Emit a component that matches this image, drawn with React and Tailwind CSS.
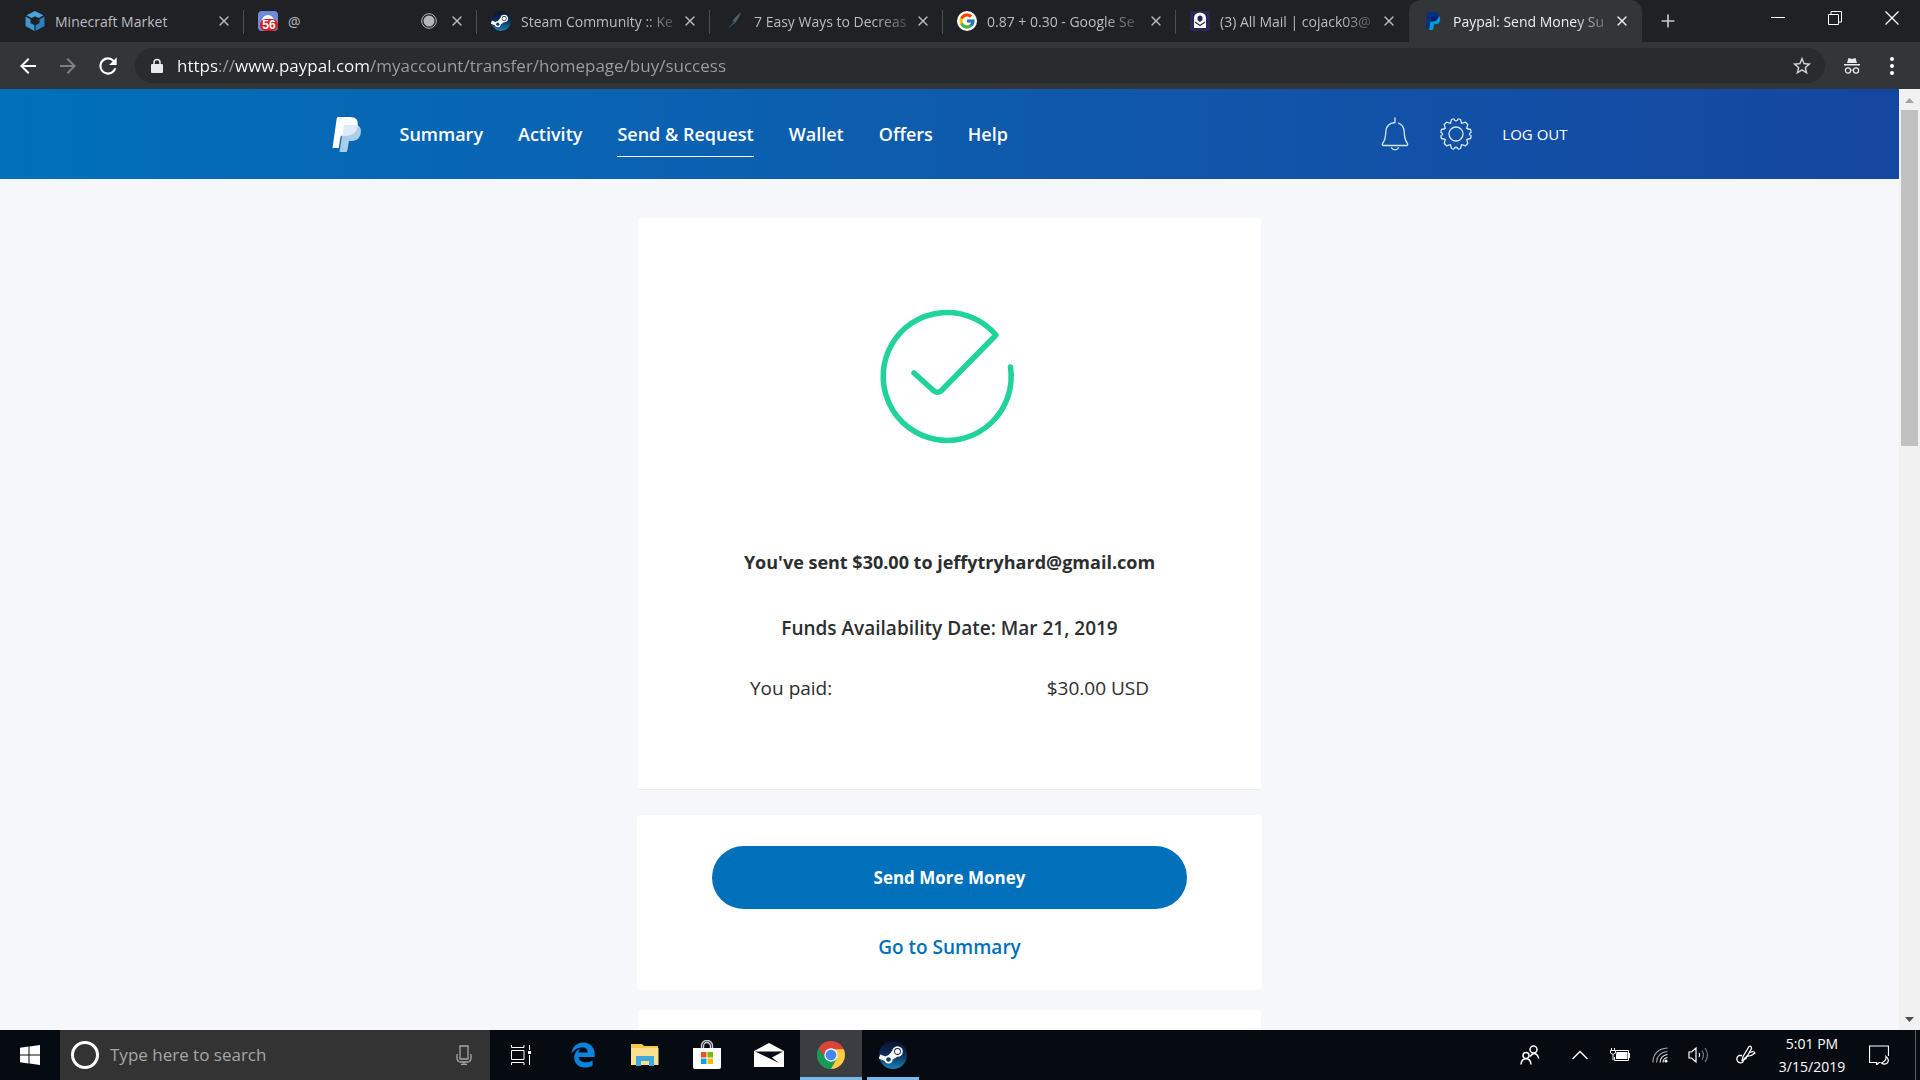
import { FaEdgeLegacy } from "react-icons/fa6";
import { FcGoogle } from "react-icons/fc";
import { X, Plus } from "lucide-react";

function PayPalMark({ className, front, back, overlap }) {
  return (
    <svg viewBox="0 0 29 35" className={className} aria-hidden="true">
      <path d="M24.5 8C28 9.500 29 12.500 28.200 16.500C27.300 21.500 24 24 18.500 24H16.500L14.800 33.500Q14.600 35 13 35H7L11 9Z" fill={back} />
      <path d="M5.600 0H17.500C23.500 0 26 3.300 25.200 8.500C24.200 15 20 18.500 13.500 18.500H9.800Q8.300 18.500 8 20L6.300 31H0L4.200 1.400Q4.400 0 5.600 0Z" fill={front} />
      <path d="M11.500 8H25.200C24.200 15 20 18.500 13.500 18.500H9.800Z" fill={overlap} />
    </svg>
  );
}

function CubeIcon() {
  return (
    <svg viewBox="0 0 20 20" className="h-5 w-5" aria-hidden="true">
      <path d="M10 0L18.500 4.300L13.500 7L10 5.200L6.500 7L1.500 4.300Z" fill="#4aa3df" />
      <path d="M0.500 5.500L5.500 8.200V12L9.400 14.300V20L0.500 15Z" fill="#3f97d3" />
      <path d="M19.500 5.500L14.500 8.200V12L10.600 14.300V20L19.500 15Z" fill="#2b7fbd" />
    </svg>
  );
}

function DiscordBadge() {
  return (
    <span className="relative block h-5 w-5 rounded-sm bg-[#7289da]">
      <span className="absolute top-1 left-1 h-3 w-3 rounded-full bg-white" />
      <span className="absolute right-0 bottom-0 flex h-3 w-[18px] items-center justify-center rounded-md bg-[#d81a20] font-['Liberation_Sans',sans-serif] text-[12px] leading-none font-bold text-white">
        56
      </span>
    </span>
  );
}

function SteamIcon({ className }) {
  return (
    <svg viewBox="0 0 28 28" className={className} aria-hidden="true">
      <defs>
        <linearGradient id="steam" x1="0" y1="0" x2="0" y2="1">
          <stop offset="0" stopColor="#0b1030" />
          <stop offset="0.5" stopColor="#0d2f5c" />
          <stop offset="1" stopColor="#1b83b8" />
        </linearGradient>
      </defs>
      <circle cx="14" cy="14" r="14" fill="url(#steam)" />
      <path d="M0.500 15.500L8 18.500L13.500 13.500" fill="none" stroke="#fff" strokeWidth="4.500" strokeLinejoin="round" />
      <path d="M13 9.500L18.500 15.500L12.500 19.500L10 15Z" fill="#fff" />
      <circle cx="9.500" cy="18.500" r="4" fill="#fff" />
      <circle cx="9.500" cy="18.500" r="2.300" fill="#123d6b" />
      <circle cx="18.500" cy="10.500" r="5.300" fill="#fff" />
      <circle cx="18.500" cy="10.500" r="3.400" fill="#0d2850" />
      <circle cx="18.500" cy="10.500" r="2.500" fill="#fff" />
    </svg>
  );
}

function FeatherIcon() {
  return (
    <svg viewBox="0 0 20 20" className="h-5 w-5" aria-hidden="true">
      <path d="M17 1C15 3 12 5 10 8L8 11L11 10L7 14L3 18L8 14C12 12 13 9 15 6Z" fill="#4d6472" />
    </svg>
  );
}

function GoogleIcon() {
  return (
    <span className="flex h-5 w-5 items-center justify-center rounded-full bg-white">
      <FcGoogle className="h-[18px] w-[18px]" />
    </span>
  );
}

function ProtonIcon() {
  return (
    <svg viewBox="0 0 20 20" className="h-5 w-5" aria-hidden="true">
      <rect width="20" height="20" rx="1" fill="#2a2757" />
      <path d="M4 17V7A6 5.500 0 0 1 16 7V17H4Z" fill="#fff" />
      <path d="M7.500 9V7A2.500 2.500 0 0 1 12.500 7V9L10 11Z" fill="#2a2757" />
      <path d="M5 11L10 14.500L15 11" fill="none" stroke="#2a2757" strokeWidth="1.200" />
    </svg>
  );
}

const TABS = [
  { title: "Minecraft Market", icon: <CubeIcon />, short: true },
  { title: "@", icon: <DiscordBadge />, short: true, recording: true },
  { title: "Steam Community :: Ke", icon: <SteamIcon className="h-5 w-5" /> },
  { title: "7 Easy Ways to Decreas", icon: <FeatherIcon /> },
  { title: "0.87 + 0.30 - Google Se", icon: <GoogleIcon /> },
  { title: "(3) All Mail | cojack03@", icon: <ProtonIcon /> },
  {
    title: "Paypal: Send Money Su",
    icon: <PayPalMark className="h-[18px] w-5" front="#003087" back="#009cde" overlap="#012169" />,
    active: true,
  },
];

const NAV = ["Summary", "Activity", "Send & Request", "Wallet", "Offers", "Help"];

function Tab({ tab, last }) {
  return (
    <div
      className={`relative flex h-full max-w-[233px] min-w-0 flex-1 items-center pr-3 pl-[14px] ${
        tab.active ? "rounded-t-xl bg-[#323639] text-[#eceef0]" : "text-[#b9bdc1]"
      }`}
    >
      <span className="flex w-5 shrink-0 justify-center">{tab.icon}</span>
      <span className="ml-[10px] min-w-0 flex-1 text-[14px] whitespace-nowrap">
        <span className={tab.short ? "" : "inline-block [mask-image:linear-gradient(to_right,black_80%,rgb(0_0_0/0.3))]"}>
          {tab.title}
        </span>
      </span>
      {tab.recording && (
        <svg viewBox="0 0 16 16" className="mr-3 h-4 w-4" aria-hidden="true">
          <circle cx="8" cy="8" r="5.500" fill="#b4b7ba" />
          <circle cx="8" cy="8" r="7.300" fill="none" stroke="#b4b7ba" strokeWidth="1" />
        </svg>
      )}
      <button aria-label="Close tab" className="flex h-4 w-4 shrink-0 items-center justify-center">
        <X className="h-4 w-4" strokeWidth={2} />
      </button>
      {!tab.active && !last && <span className="absolute top-[10px] right-0 h-6 w-px bg-[#4b4f53]" />}
    </div>
  );
}

function BrowserChrome() {
  return (
    <header className="shrink-0 font-['Open_Sans','Noto_Sans',sans-serif]">
      <div className="flex h-[42px] bg-[#202124]">
        <div className="flex min-w-0 flex-1 items-center pl-[11px]">
          {TABS.map((tab, i) => (
            <Tab key={tab.title} tab={tab} last={i === TABS.length - 2} />
          ))}
          <button aria-label="New tab" className="ml-4 text-[#c6c9cc]">
            <Plus className="h-5 w-5" strokeWidth={2} />
          </button>
        </div>
        <div className="flex h-9 shrink-0 text-white">
          <button aria-label="Minimize" className="flex w-[57px] items-center justify-center">
            <svg viewBox="0 0 14 14" className="h-[14px] w-[14px]"><path d="M0 6.500H14" stroke="currentColor" /></svg>
          </button>
          <button aria-label="Restore" className="flex w-[57px] items-center justify-center">
            <svg viewBox="0 0 14 14" className="h-[14px] w-[14px]" fill="none" stroke="currentColor">
              <path d="M0.500 3.500H10.500V13.500H0.500Z M3 3.500V0.500H13.500V11H10.500" />
            </svg>
          </button>
          <button aria-label="Close" className="flex w-[57px] items-center justify-center">
            <svg viewBox="0 0 14 14" className="h-[14px] w-[14px]"><path d="M0.500 0.500L13.500 13.500M13.500 0.500L0.500 13.500" stroke="currentColor" strokeWidth="1.300" /></svg>
          </button>
        </div>
      </div>

      {/* Toolbar */}
      <div className="flex h-[47px] items-center bg-[#323639] pr-[18px] pl-2">
        <button aria-label="Back" className="flex w-10 justify-center text-white">
          <svg viewBox="0 0 24 24" className="h-6 w-6" fill="currentColor"><path d="M20 11H7.830l5.590-5.590L12 4l-8 8 8 8 1.410-1.410L7.830 13H20v-2z" /></svg>
        </button>
        <button aria-label="Forward" className="flex w-10 justify-center text-[#7d8185]">
          <svg viewBox="0 0 24 24" className="h-6 w-6" fill="currentColor"><path d="M12 4l-1.410 1.410L16.170 11H4v2h12.170l-5.580 5.590L12 20l8-8z" /></svg>
        </button>
        <button aria-label="Reload" className="flex w-10 justify-center text-white">
          <svg viewBox="0 0 24 24" className="h-[26px] w-[26px]" fill="currentColor"><path d="M17.650 6.350A7.960 7.960 0 0 0 12 4a8 8 0 1 0 7.730 10h-2.080A6 6 0 1 1 12 6c1.660 0 3.140.690 4.220 1.780L13 11h7V4l-2.350 2.350z" /></svg>
        </button>
        <div className="ml-[7px] flex h-[35px] flex-1 items-center rounded-full bg-[#282c2f] pr-3 pl-[14px]">
          <svg viewBox="0 0 16 16" className="h-4 w-4 text-[#e8eaed]" fill="currentColor" aria-hidden="true">
            <path d="M3 6H13Q14 6 14 7V14Q14 15 13 15H3Q2 15 2 14V7Q2 6 3 6Z" />
            <path d="M5 6.500V4.500A3 3 0 0 1 11 4.500V6.500" fill="none" stroke="currentColor" strokeWidth="1.500" />
          </svg>
          {/* scheme and host are lit, the rest of the URL is dimmed */}
          <input
            type="text"
            aria-label="Address"
            defaultValue="https://www.paypal.com/myaccount/transfer/homepage/buy/success"
            className="ml-3 flex-1 bg-[linear-gradient(to_right,#ffffff_41px,#9aa0a6_41px,#9aa0a6_58px,#ffffff_58px,#ffffff_192px,#9aa0a6_192px)] bg-clip-text text-[17px] text-transparent outline-none"
          />
          <button aria-label="Bookmark this page" className="text-[#d0d3d6]">
            <svg viewBox="0 0 24 24" className="h-[22px] w-[22px]" fill="currentColor"><path d="M22 9.240l-7.190-.620L12 2 9.190 8.630 2 9.240l5.460 4.730L5.820 21 12 17.270 18.180 21l-1.630-7.030L22 9.240zM12 15.400l-3.760 2.270 1-4.280-3.320-2.880 4.380-.380L12 6.100l1.710 4.040 4.380.380-3.320 2.880 1 4.280L12 15.400z" /></svg>
          </button>
        </div>
        <svg viewBox="0 0 18 18" className="ml-[18px] h-[18px] w-[18px] text-[#e8eaed]" aria-label="Incognito">
          <path d="M5.500 1L9 2L12.500 1L14 6H4Z M1 7H17V8.500H1Z" fill="currentColor" />
          <path d="M7.500 13.500Q9 12.500 10.500 13.500" fill="none" stroke="currentColor" />
          <circle cx="5" cy="13.500" r="2.600" fill="none" stroke="currentColor" strokeWidth="1.200" />
          <circle cx="13" cy="13.500" r="2.600" fill="none" stroke="currentColor" strokeWidth="1.200" />
        </svg>
        <button aria-label="Menu" className="ml-[21px] text-white">
          <svg viewBox="0 0 20 20" className="h-5 w-5" fill="currentColor"><circle cx="10" cy="3" r="2" /><circle cx="10" cy="10" r="2" /><circle cx="10" cy="17" r="2" /></svg>
        </button>
      </div>
    </header>
  );
}

function PayPalHeader() {
  return (
    <div className="flex h-[90px] items-center justify-center bg-linear-to-r from-[#0070ba] to-[#1546a0] text-white">
      <div className="flex w-full max-w-[1236px] items-center">
        <a href="#" aria-label="PayPal home">
          <PayPalMark className="h-[35px] w-[30px]" front="#ffffff" back="#a9cdea" overlap="#dfeaf8" />
        </a>
        <nav className="ml-[38px] flex gap-[35px] text-[18px] font-semibold">
          {NAV.map((item) => (
            <a
              key={item}
              href="#"
              className={`border-b py-2 leading-7 ${item === "Send & Request" ? "border-white" : "border-transparent"}`}
            >
              {item}
            </a>
          ))}
        </nav>
        <button aria-label="Notifications" className="ml-auto">
          <svg viewBox="0 0 28 36" className="h-9 w-7" fill="none" stroke="#d5e5f7" strokeWidth="1.300" strokeLinecap="round" strokeLinejoin="round">
            <path d="M14 2V6.500C8 7 5 11 4.800 16C4.500 21 4.500 24 1.500 27.500Q0.800 29.500 2.500 29.500H25.500Q27.200 29.500 26.500 27.500C23.500 24 23.500 21 23.200 16C23 11.500 21 8.500 17.500 7.200" />
            <path d="M10.500 31.800A3.800 3.300 0 0 0 17.500 31.800" />
          </svg>
        </button>
        <button aria-label="Settings" className="ml-[31px]">
          <svg viewBox="0 0 32 32" className="h-8 w-8" fill="none" stroke="#d5e5f7" strokeWidth="1.300" strokeLinejoin="round">
            <circle cx="16" cy="16" r="7" />
            <path d="M13 1Q14 .5 14.500 2Q16 3.500 17.500 2Q18 .5 19 1L20.500 1.500L21.500 5.300L25.500 4.200L27.800 6.500L26.700 10.500L30.500 11.500L31 13.500Q31.500 14.500 30 15Q28.800 16 30 17Q31.500 17.500 31 18.500L30.500 20.500L26.700 21.500L27.800 25.500L25.500 27.800L21.500 26.700L20.500 30.500L19 31Q18 31.500 17.500 30Q16 28.500 14.500 30Q14 31.500 13 31L11.500 30.500L10.500 26.700L6.500 27.800L4.200 25.500L5.300 21.500L1.500 20.500L1 18.500Q.5 17.500 2 17Q3.200 16 2 15Q.5 14.500 1 13.500L1.500 11.500L5.300 10.500L4.200 6.500L6.500 4.200L10.500 5.300L11.500 1.500Z" />
          </svg>
        </button>
        <a href="#" className="ml-[30px] text-[15px] font-medium">LOG OUT</a>
      </div>
    </div>
  );
}

function SuccessPage() {
  return (
    <main className="min-w-0 flex-1 bg-[#f5f7fa] font-['Open_Sans','Noto_Sans',sans-serif] text-[#2c2e2f]">
      <PayPalHeader />
      <div className="mx-auto mt-[39px] flex max-w-[625px] flex-col items-center">
        <section className="flex w-full max-w-[623px] flex-col items-center rounded-xs bg-white px-24 pt-[91px] pb-[87px] shadow-2xs">
          <svg viewBox="3 0 134 134" className="h-[134px] w-[134px] overflow-visible" fill="none" stroke="#1fd39a" strokeWidth="5.500" strokeLinecap="round" strokeLinejoin="round" aria-label="Success">
            <path d="M34 64L54 82Q57.500 84.500 61 82L116 26A64 64 0 1 0 130.500 58" />
          </svg>
          <h1 className="mt-[105px] text-center text-[18px] leading-7 font-bold">You've sent $30.00 to jeffytryhard@gmail.com</h1>
          <p className="mt-[38px] text-center text-[19px] leading-7 font-semibold">Funds Availability Date: Mar 21, 2019</p>
          <dl className="mt-8 flex w-full justify-between px-4 text-[19px] leading-7">
            <dt>You paid:</dt>
            <dd>$30.00 USD</dd>
          </dl>
        </section>
        <section className="mt-[26px] flex w-full flex-col items-center rounded-sm bg-white px-[75px] pt-[31px] pb-[29px]">
          <button className="h-[63px] w-full rounded-full bg-[#0070ba] text-[17px] font-bold text-white">Send More Money</button>
          <a href="#" className="mt-6 text-[19px] leading-7 font-semibold text-[#0070ba]">Go to Summary</a>
        </section>
        <section className="mt-5 h-20 w-full max-w-[623px] rounded-xs bg-white shadow-2xs" />
      </div>
    </main>
  );
}

function ScrollTrack() {
  return (
    <div className="flex w-[21px] shrink-0 flex-col items-center bg-[#f1f1f1]" aria-hidden="true">
      <svg viewBox="0 0 21 21" className="h-[21px] w-[21px]"><path d="M6 14L10.500 9L15 14Z" fill="#a3a3a3" /></svg>
      <div className="h-[336px] w-[17px] bg-[#c1c1c1]" />
      <svg viewBox="0 0 21 21" className="mt-auto h-[21px] w-[21px]"><path d="M6 8L10.500 13L15 8Z" fill="#505050" /></svg>
    </div>
  );
}

function TaskViewIcon() {
  return (
    <svg viewBox="0 0 20 20" className="h-5 w-5" fill="none" stroke="#fff">
      <path d="M0.500 5.500H13V14.500H0.500Z M0.500 0V2.500H13V0 M0.500 20V17.500H13V20 M18.500 0V5M18.500 10V20" />
      <path d="M17 6H20V9H17Z" fill="#fff" stroke="none" />
    </svg>
  );
}

function ExplorerIcon() {
  return (
    <svg viewBox="0 0 28 24" className="h-6 w-7">
      <path d="M0 1H11L13 3H27V22H0Z" fill="#f2c94c" />
      <path d="M1 5H27.500V22H0V6Z" fill="#fbe08f" />
      <path d="M5 13H23V23H18V18H10V23H5Z" fill="#3da9dc" />
    </svg>
  );
}

function StoreIcon() {
  return (
    <svg viewBox="0 0 30 30" className="h-[30px] w-[30px]">
      <path d="M9.500 9V6A5.500 5.500 0 0 1 20.500 6V9M11.500 9V6.500A3.500 4 0 0 1 18.500 6.500V9" fill="none" stroke="#c9ccd0" strokeWidth="1.400" />
      <path d="M1 8H29V27Q29 29 27 29H3Q1 29 1 27Z" fill="#fff" />
      <path d="M9 12H14.500V17.500H9Z" fill="#f25022" />
      <path d="M15.500 12H21V17.500H15.500Z" fill="#7fba00" />
      <path d="M9 18.500H14.500V24H9Z" fill="#00a4ef" />
      <path d="M15.500 18.500H21V24H15.500Z" fill="#ffb900" />
    </svg>
  );
}

function MailIcon() {
  return (
    <svg viewBox="0 0 30 24" className="h-6 w-[30px]">
      <path d="M0 8L15 0L30 8V24H0Z" fill="#fff" />
      <path d="M1 8.500H29L18 14.500L25 20L1 8.500Z" fill="#060b12" />
    </svg>
  );
}

function ChromeIcon() {
  return (
    <svg viewBox="0 0 28 28" className="h-7 w-7">
      <circle cx="14" cy="14" r="14" fill="#db4437" />
      <path d="M1.880 7A14 14 0 0 0 14 28L19.600 17.200L8.400 17.200Z" fill="#0f9d58" />
      <path d="M14 28A14 14 0 0 0 26.700 8.200H14L20 17Z" fill="#ffcd40" />
      <circle cx="14" cy="14" r="6.700" fill="#f1f1f1" />
      <circle cx="14" cy="14" r="5.300" fill="#4285f4" />
    </svg>
  );
}

const APPS = [
  { name: "Task View", icon: <TaskViewIcon /> },
  { name: "Microsoft Edge", icon: <FaEdgeLegacy className="h-[26px] w-[26px] text-[#0a84e0]" /> },
  { name: "File Explorer", icon: <ExplorerIcon /> },
  { name: "Microsoft Store", icon: <StoreIcon /> },
  { name: "Mail", icon: <MailIcon /> },
  { name: "Google Chrome", icon: <ChromeIcon />, state: "focused" },
  { name: "Steam", icon: <SteamIcon className="h-7 w-7" />, state: "running" },
];

function Tray() {
  return (
    <div className="ml-auto flex items-center text-white">
      <svg viewBox="0 0 20 20" className="h-5 w-5" fill="none" stroke="currentColor" strokeWidth="1.500" aria-label="People">
        <circle cx="13.500" cy="4.500" r="3.500" />
        <path d="M10 11.500Q13 7.500 16 9Q18.500 10.500 18.700 13.500" />
        <circle cx="6" cy="10.500" r="3" />
        <path d="M1 19.500Q1.500 13.800 6 13.800T11 19.500" />
      </svg>
      <svg viewBox="0 0 16 10" className="ml-8 h-[10px] w-4" fill="none" stroke="currentColor" strokeWidth="1.300" aria-label="Hidden icons">
        <path d="M0.500 9L8 1.500L15.500 9" />
      </svg>
      <svg viewBox="0 0 20 14" className="ml-[22px] h-[14px] w-5" fill="none" stroke="currentColor" aria-label="Battery">
        <path d="M5.500 2.500H18.500V12.500H4.500V9M1.500 0V2M4.500 0V2M0.500 2.500H5.500V5Q3 8 0.500 5ZM3 7V12M19.500 5V10" />
        <path d="M6.500 4H17.500V11H6V7.500Z" fill="currentColor" stroke="none" />
      </svg>
      <svg viewBox="0 0 16 16" className="ml-[22px] h-4 w-4" fill="none" stroke="currentColor" strokeWidth="1.100" aria-label="Wi-Fi">
        <path d="M11 15.500A5 5 0 0 1 15.500 10.500M8 15.500Q8.500 8.500 15.500 7.500" />
        <path d="M4.500 15.500Q5 5.500 15.500 4.500M0.800 15.500Q1.500 2 15.500 1" stroke="#a5a9ad" />
        <circle cx="14" cy="14" r="1.600" fill="currentColor" stroke="none" />
      </svg>
      <svg viewBox="0 0 22 18" className="ml-5 h-[18px] w-[22px]" fill="none" stroke="currentColor" strokeWidth="1.200" aria-label="Volume">
        <path d="M1 6H3.500L8 2V16L3.500 12H1ZM11 7Q12.500 9 11 11" />
        <path d="M14 4.500Q17 9 14 13.500M17 2Q22 9 17 16" stroke="#777b80" />
      </svg>
      <svg viewBox="0 0 22 22" className="ml-6 h-[22px] w-[22px]" fill="none" stroke="currentColor" strokeWidth="1.300" strokeLinejoin="round" aria-label="Ink workspace">
        <path d="M8 17L9 12.500L15 2.500Q17.500 1.500 17.500 4.500L12 14.500Z" />
        <path d="M8 11.500H5A3.800 3.800 0 1 0 8.500 18.500Q10 14 13 12Q17 12.500 21 9Q19.500 6.500 16 8.500" />
      </svg>
      <time className="ml-[18px] w-[76px] text-center text-[14px] leading-[23px]">
        5:01 PM
        <br />
        3/15/2019
      </time>
      <button aria-label="Notifications" className="ml-[19px]">
        <svg viewBox="0 0 20 20" className="h-5 w-5" fill="none" stroke="currentColor" strokeWidth="1.200">
          <path d="M11.500 17.500H10L7.500 20V17.500H0.500V1H19.500V11" />
          <path d="M17 11.500Q17.500 16 12.500 18Q15 20 18 18.200Q21 15 17 11.500Z" />
        </svg>
      </button>
      <span className="ml-[26px] h-[50px] w-px bg-[#5d6166]" />
      <span className="w-1" />
    </div>
  );
}

function Taskbar() {
  return (
    <footer className="flex h-[50px] shrink-0 bg-[#060b12] font-['Open_Sans','Noto_Sans',sans-serif]">
      <button aria-label="Start" className="flex w-[60px] items-center justify-center">
        <svg viewBox="0 0 20 20" className="h-5 w-5" fill="#fff">
          <path d="M0 2.800L8.500 1.600V9.500H0ZM9.500 1.400L20 0V9.500H9.500ZM0 10.500H8.500V18.400L0 17.200ZM9.500 10.500H20V20L9.500 18.600Z" />
        </svg>
      </button>
      <label className="flex w-[430px] items-center bg-[#333333] pr-[18px] pl-[11px]">
        <span className="h-7 w-7 shrink-0 rounded-full border-[3px] border-white" />
        <input
          type="text"
          aria-label="Search"
          placeholder="Type here to search"
          className="ml-[11px] min-w-0 flex-1 text-[17px] text-white outline-none placeholder:text-[#a6a6a6]"
        />
        <svg viewBox="0 0 16 20" className="h-5 w-4" fill="none" stroke="#a6a6a6" strokeWidth="1.300" aria-hidden="true">
          <path d="M4 1H12V14H4ZM1 9V13Q1 17 5 17H11Q15 17 15 13V9M8 17V19.500M5 19.500H11" />
        </svg>
      </label>
      {APPS.map((app) => (
        <button
          key={app.name}
          aria-label={app.name}
          className={`relative flex w-[62px] items-center justify-center ${app.state === "focused" ? "bg-[#3a3e42]" : ""}`}
        >
          {app.icon}
          {app.state && (
            <span className={`absolute bottom-0 h-[3px] bg-[#76b9ed] ${app.state === "focused" ? "inset-x-0" : "inset-x-[5px]"}`} />
          )}
        </button>
      ))}
      <Tray />
    </footer>
  );
}

export default function App() {
  return (
    <div className="flex h-screen flex-col overflow-hidden">
      <BrowserChrome />
      <div className="flex min-h-0 flex-1 overflow-hidden">
        <SuccessPage />
        <ScrollTrack />
      </div>
      <Taskbar />
    </div>
  );
}
